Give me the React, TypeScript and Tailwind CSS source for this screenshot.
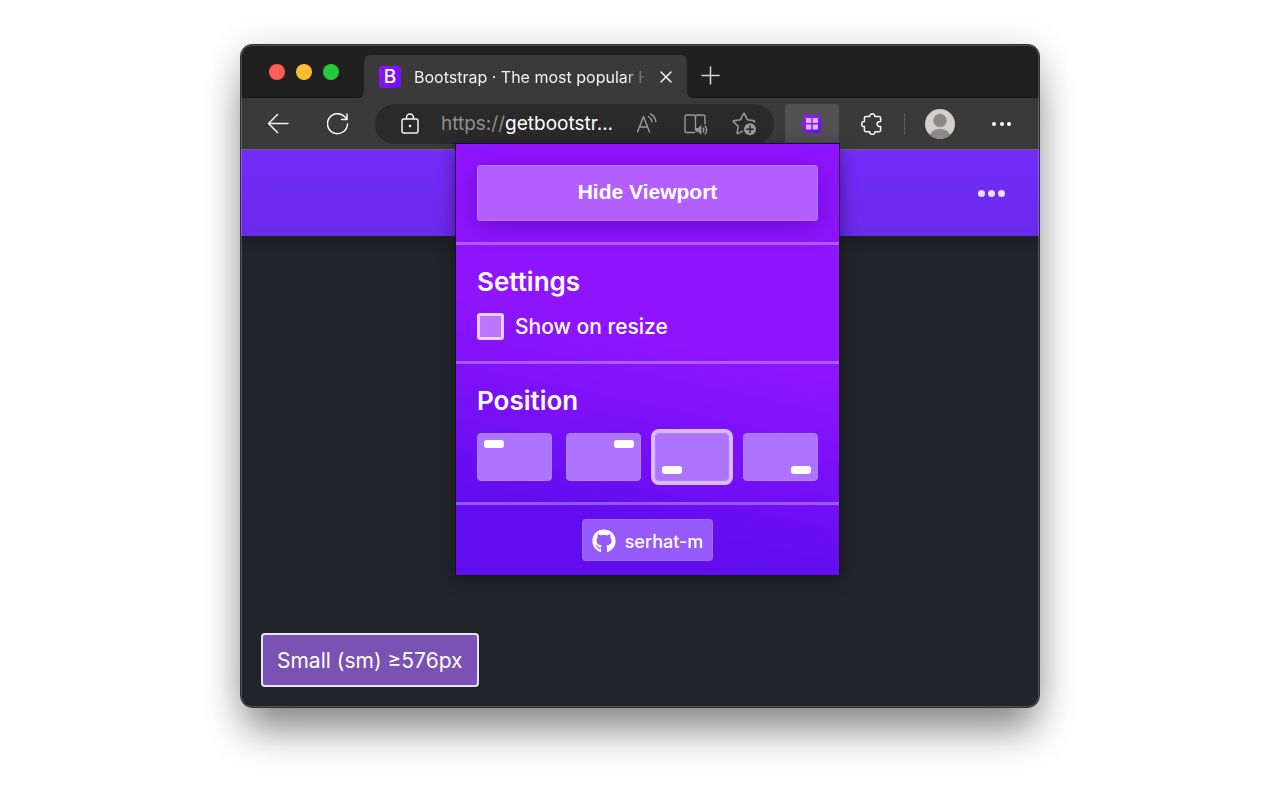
import { useState } from "react";
import { FaGithub } from "react-icons/fa";

const positions = [
    { id: "top-left", align: "items-start justify-start" },
    { id: "top-right", align: "items-start justify-end" },
    { id: "bottom-left", align: "items-end justify-start" },
    { id: "bottom-right", align: "items-end justify-end" },
];

function TabStrip() {
    return (
        <div className="flex h-[53px] bg-[#3a3a3a]">
            <div className="flex w-[123px] shrink-0 gap-[11px] rounded-br-[6px] border-b border-[#181818] bg-[#202020] pl-7 pt-[19px]">
                <button aria-label="Close window" className="h-4 w-4 rounded-full bg-[#ff5f57]" />
                <button aria-label="Minimize window" className="h-4 w-4 rounded-full bg-[#febc2e]" />
                <button aria-label="Zoom window" className="h-4 w-4 rounded-full bg-[#28c840]" />
            </div>
            <div className="w-[323px] bg-[linear-gradient(#202020_50%,transparent_50%)] pt-[10px]">
                <div className="flex h-full items-center rounded-t-[6px] bg-[#3a3a3a] pl-[15px] pr-3">
                    <span className="flex h-[22px] w-[22px] shrink-0 items-center justify-center rounded-[3px] bg-linear-to-br from-[#9013fe] to-[#6610f2] text-[19px] font-medium leading-[22px] text-white">B</span>
                    <span className="ml-[13px] flex-1 overflow-hidden whitespace-nowrap mask-r-from-90% text-[16px] text-[#f1f1f1]">Bootstrap · The most popular H</span>
                    <button aria-label="Close tab" className="ml-[9px] flex h-[18px] w-[18px] shrink-0 items-center justify-center">
                        <svg viewBox="0 0 12 12" className="h-3 w-3" fill="none" stroke="#f1f1f1" strokeWidth="1.5" strokeLinecap="round">
                            <path d="M1 1l10 10M11 1L1 11" />
                        </svg>
                    </button>
                </div>
            </div>
            <div className="flex-1 rounded-bl-[6px] border-b border-[#181818] bg-[#202020] pl-[14px] pt-[21px]">
                <button aria-label="New tab" className="block h-5 w-5">
                    <svg viewBox="0 0 20 20" fill="none" stroke="#d8d8d8" strokeWidth="1.5" strokeLinecap="round">
                        <path d="M9.5 1v17M1 9.5h17" />
                    </svg>
                </button>
            </div>
        </div>
    );
}

function AddressBar() {
    return (
        <div className="flex h-10 min-w-0 flex-1 items-center rounded-full bg-[#2a2a2a] pl-[26px] pr-[18px]">
            <svg viewBox="0 0 18 22" className="h-[22px] w-[18px] shrink-0" fill="none" stroke="#f5f5f5" strokeWidth="1.5">
                <rect x="1" y="6" width="16" height="14" rx="2" />
                <path d="M5.500 6V4.500a3.500 3.500 0 0 1 7 0V6" />
                <circle cx="9" cy="13" r="1.3" fill="#f5f5f5" stroke="none" />
            </svg>
            <button className="ml-[22px] min-w-0 flex-1 overflow-hidden whitespace-nowrap text-left text-[19px] leading-6 text-white">
                <span className="text-[#8f8f8f]">https://</span>getbootstr...
            </button>
            <div className="flex shrink-0 items-center gap-6 text-[#9a9a9a]">
                <button aria-label="Read aloud">
                    <svg viewBox="0 0 24 24" className="h-6 w-6" fill="none" stroke="currentColor" strokeWidth="1.4" strokeLinecap="round" strokeLinejoin="round">
                        <path d="M3.500 20L9.500 4.500l6 15.500M5.500 15h8M14.500 4.500c2 1.300 3.200 3 3.500 5.300M16.500 1.800c3.200 1.800 5 4.500 5.400 8" />
                    </svg>
                </button>
                <button aria-label="Immersive reader">
                    <svg viewBox="0 0 26 24" className="h-6 w-[26px]" fill="none" stroke="currentColor" strokeWidth="1.4" strokeLinecap="round" strokeLinejoin="round">
                        <path d="M12.500 20.500H4.500a1.500 1.500 0 0 1-1.500-1.500V4.500A1.500 1.500 0 0 1 4.500 3h7a2 2 0 0 1 2 2v12M13.500 5a2 2 0 0 1 2-2h6A1.500 1.500 0 0 1 23 4.500V12" />
                        <path d="M14 16.500h2l3-3v8.600l-3-2.800h-2z" fill="currentColor" strokeWidth="0.8" />
                        <path d="M21 16c.9 1.200.9 2.800 0 4M23.200 14.300c1.700 2.200 1.700 5.200 0 7.400" />
                    </svg>
                </button>
                <button aria-label="Add to favorites">
                    <svg viewBox="0 0 24 24" className="h-6 w-6" fill="none" stroke="currentColor" strokeWidth="1.5" strokeLinecap="round" strokeLinejoin="round">
                        <path d="M22 10l.4-.4c.3-.3.1-.9-.3-.9l-6.700-1-3-6c-.2-.5-.8-.5-1 0l-3 6-6.700 1c-.5.1-.6.600-.3.900l4.900 4.800-1.200 6.600c-.1.500.400.800.800.600l4.600-2.400" />
                        <circle cx="18" cy="17.200" r="6" fill="currentColor" stroke="none" />
                        <path d="M18 14v6.400M14.800 17.200h6.400" stroke="#2a2a2a" />
                    </svg>
                </button>
            </div>
        </div>
    );
}

function Popup() {
    const [showOnResize, setShowOnResize] = useState(false);
    const [position, setPosition] = useState("bottom-left");

    return (
        <div className="absolute -right-px top-[39px] z-10 w-[385px] divide-y-3 divide-white/30 border border-[#1b0a33] bg-[linear-gradient(192deg,#8f14ff_46%,#620cf0_84%)] text-white shadow-[0_4px_16px_rgba(0,0,0,0.4)]">
            <div className="p-[21px]">
                <button className="h-14 w-full rounded-[3px] border border-[#bd74ff] bg-[#b35fff] pb-[2px] font-['Liberation_Sans',sans-serif] text-[21px] font-bold shadow-[0_6px_24px_rgba(40,0,110,0.35)]">
                    Hide Viewport
                </button>
            </div>
            <div className="p-[21px]">
                <h2 className="text-[26px] font-semibold leading-8">Settings</h2>
                <label className="mt-[15px] flex items-center gap-[11px] text-[21px] font-medium leading-[27px]">
                    <input
                        type="checkbox"
                        checked={showOnResize}
                        onChange={(e) => setShowOnResize(e.target.checked)}
                        className="h-[27px] w-[27px] appearance-none rounded-[3px] border-3 border-[#e9d0ff] bg-[#bc75ff] checked:bg-white"
                    />
                    Show on resize
                </label>
            </div>
            <fieldset className="p-[21px]">
                <h2 className="text-[26px] font-semibold leading-8">Position</h2>
                <div className="mt-4 grid grid-cols-4 gap-[14px]">
                    {positions.map(({ id, align }) => (
                        <label key={id} className={`relative flex h-12 rounded-[4px] border border-[#b27fff] bg-[#ad75ff] p-[6px] has-checked:ring-4 has-checked:ring-[#dab9ff] ${align}`}>
                            <input
                                type="radio"
                                name="position"
                                aria-label={id}
                                checked={position === id}
                                onChange={() => setPosition(id)}
                                className="sr-only"
                            />
                            <span className="h-2 w-5 rounded-[3px] bg-white" />
                        </label>
                    ))}
                </div>
            </fieldset>
            <div className="flex justify-center p-[14px]">
                <a href="#github" className="flex h-[42px] items-center gap-[9px] rounded-[4px] border border-white/10 bg-[#965afa] px-[9px] pt-[2px] text-[18px] font-medium">
                    <FaGithub className="h-6 w-6" />
                    serhat-m
                </a>
            </div>
        </div>
    );
}

function Toolbar() {
    return (
        <div className="flex h-[52px] items-center border-b border-[#6b6670] bg-[#3a3a3a] pl-[26px] pr-7 pt-px">
            <button aria-label="Back">
                <svg viewBox="0 0 22 22" className="h-[22px] w-[22px]" fill="none" stroke="#f5f5f5" strokeWidth="1.5" strokeLinecap="round" strokeLinejoin="round">
                    <path d="M21 10.500H1.500M10.500 1.500l-9 9 9 9" />
                </svg>
            </button>
            <button aria-label="Refresh" className="ml-[38px]">
                <svg viewBox="0 0 22 22" className="h-[22px] w-[22px]" fill="none" stroke="#f5f5f5" strokeWidth="1.5" strokeLinecap="round" strokeLinejoin="round">
                    <path d="M20.500 11A10 10 0 1 1 17.500 3.500L20 6M20 1v5.500h-5.500" />
                </svg>
            </button>
            <div className="ml-[26px] flex min-w-0 flex-1">
                <AddressBar />
            </div>
            <div className="relative ml-[11px]">
                <button aria-label="Viewport extension" className="flex h-10 w-[54px] items-center justify-center rounded-t-[3px] bg-[#515151]">
                    <svg viewBox="0 0 22 18" className="h-[18px] w-[22px]">
                        <defs>
                            <linearGradient id="ext" x1="0" y1="0" x2="1" y2="1">
                                <stop offset="0.3" stopColor="#9013fe" />
                                <stop offset="1" stopColor="#5c10f0" />
                            </linearGradient>
                        </defs>
                        <path d="M4.500 0h13a2 2 0 0 1 2 2v4.500l2.200 2v1l-2.200 2V16a2 2 0 0 1-2 2h-13a2 2 0 0 1-2-2v-4.500l-2.200-2v-1l2.200-2V2a2 2 0 0 1 2-2z" fill="url(#ext)" />
                        <path d="M5 3h5.300v5H5zM11.700 3H17v5h-5.300zM5 9.500h5.300v5H5zM11.700 9.500H17v5h-5.300z" fill="#d9b5ff" />
                    </svg>
                </button>
                <Popup />
            </div>
            <button aria-label="Extensions" className="ml-[22px]">
                <svg viewBox="0 0 22 22" className="h-[22px] w-[22px]" fill="none" stroke="#f5f5f5" strokeWidth="1.5" strokeLinejoin="round">
                    <path d="M5 3.500h3.800c-.4-3.600 5.400-3.600 5 0h4.200a1.600 1.600 0 0 1 1.600 1.600v3.300c-4.700-.4-4.700 5.600 0 5.200v3.600a1.600 1.600 0 0 1-1.600 1.600h-4.200c.4 3.600-5.400 3.600-5 0H5a1.600 1.600 0 0 1-1.600-1.600v-3.600c-3.600.4-3.600-5.600 0-5.200V5.100A1.600 1.600 0 0 1 5 3.500z" />
                </svg>
            </button>
            <span className="ml-[21px] h-[22px] w-px bg-[#5c5c5c]" />
            <button aria-label="Profile" className="ml-5">
                <svg viewBox="0 0 30 30" className="h-[30px] w-[30px]">
                    <clipPath id="avatar">
                        <circle cx="15" cy="15" r="15" />
                    </clipPath>
                    <g clipPath="url(#avatar)">
                        <path d="M0 0h30v30H0z" fill="#d2d0cd" />
                        <circle cx="15" cy="11.500" r="6.700" fill="#8b8a88" />
                        <ellipse cx="15" cy="29" rx="11" ry="9.200" fill="#8b8a88" />
                    </g>
                </svg>
            </button>
            <button aria-label="Menu" className="ml-[37px] flex w-[19px] items-center justify-between">
                <i className="h-1 w-1 rounded-full bg-white" />
                <i className="h-1 w-1 rounded-full bg-white" />
                <i className="h-1 w-1 rounded-full bg-white" />
            </button>
        </div>
    );
}

export default function App() {
    return (
        <div className="min-h-screen bg-white py-11 font-['Inter',sans-serif]">
            <div className="relative mx-auto max-w-[800px] overflow-hidden rounded-[12px] border border-[#303234] shadow-[0_28px_40px_-6px_rgba(0,0,0,0.42),0_4px_36px_rgba(0,0,0,0.16)] after:pointer-events-none after:absolute after:inset-0 after:rounded-[11px] after:border after:border-white/20">
                <TabStrip />
                <Toolbar />
                <nav className="flex h-[86px] items-center justify-end bg-linear-to-b from-[#722cf9] to-[#6a2aea] px-[34px]">
                    <button aria-label="Toggle navigation" className="flex w-[27px] justify-between">
                        <i className="h-[7px] w-[7px] rounded-full bg-[#e9defe]" />
                        <i className="h-[7px] w-[7px] rounded-full bg-[#e9defe]" />
                        <i className="h-[7px] w-[7px] rounded-full bg-[#e9defe]" />
                    </button>
                </nav>
                <main className="flex min-h-[471px] items-end bg-[#212529] bg-linear-to-b from-[#1d2023] to-[#212529] to-5% p-5">
                    <div className="rounded-[4px] border-2 border-[#e9e2f3] bg-[#7952b3] px-[14px] pb-[8px] pt-[10px] text-[21px] leading-8 text-white">
                        Small (sm) ≥576px
                    </div>
                </main>
            </div>
        </div>
    );
}
